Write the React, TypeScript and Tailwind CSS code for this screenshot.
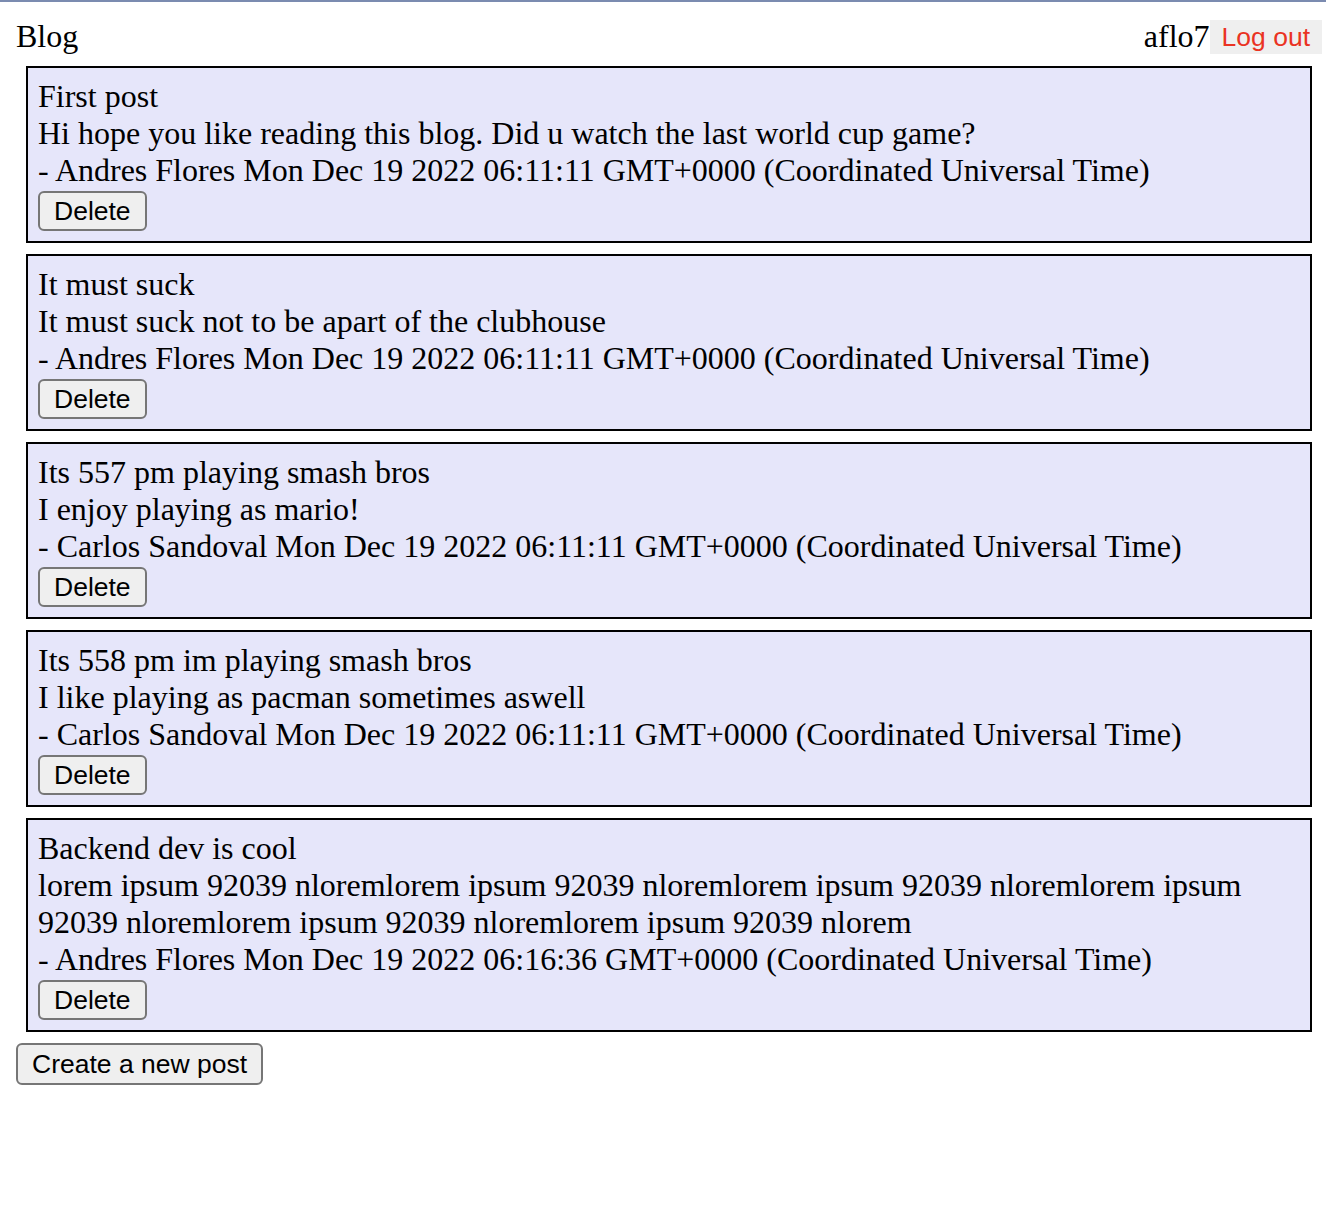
import React from 'react';

type Post = {
  title: string;
  body: string;
  author: string;
  date: string;
};

const posts: Post[] = [
  {
    title: 'First post',
    body: 'Hi hope you like reading this blog. Did u watch the last world cup game?',
    author: 'Andres Flores',
    date: 'Mon Dec 19 2022 06:11:11 GMT+0000 (Coordinated Universal Time)',
  },
  {
    title: 'It must suck',
    body: 'It must suck not to be apart of the clubhouse',
    author: 'Andres Flores',
    date: 'Mon Dec 19 2022 06:11:11 GMT+0000 (Coordinated Universal Time)',
  },
  {
    title: 'Its 557 pm playing smash bros',
    body: 'I enjoy playing as mario!',
    author: 'Carlos Sandoval',
    date: 'Mon Dec 19 2022 06:11:11 GMT+0000 (Coordinated Universal Time)',
  },
  {
    title: 'Its 558 pm im playing smash bros',
    body: 'I like playing as pacman sometimes aswell',
    author: 'Carlos Sandoval',
    date: 'Mon Dec 19 2022 06:11:11 GMT+0000 (Coordinated Universal Time)',
  },
  {
    title: 'Backend dev is cool',
    body: 'lorem ipsum 92039 nloremlorem ipsum 92039 nloremlorem ipsum 92039 nloremlorem ipsum 92039 nloremlorem ipsum 92039 nloremlorem ipsum 92039 nlorem',
    author: 'Andres Flores',
    date: 'Mon Dec 19 2022 06:16:36 GMT+0000 (Coordinated Universal Time)',
  },
];

const btn =
  "block bg-[#efefef] border-2 border-[#767676] rounded-[6px] px-[14px] text-[26.5px] leading-[32px] text-black font-['Liberation_Sans',Arial,sans-serif]";

const App: React.FC = () => {
  return (
    <div className="min-h-[1214px] bg-white border-t-2 border-[#7b8bb0] font-['Liberation_Serif','Times_New_Roman',serif] text-[32px] leading-[37px] text-black">
      <div className="pl-4 pr-1 pt-4">
        <div className="flex items-center justify-between h-[37px]">
          <span>Blog</span>
          <div className="flex items-center">
            <span>aflo7</span>
            <button className="bg-[#efefef] px-3 py-[2px] text-[26.5px] leading-[30px] text-[#ea3323] font-['Liberation_Sans',Arial,sans-serif]">
              Log out
            </button>
          </div>
        </div>

        <div className="mt-[11px] flex flex-col gap-[11px] px-[10px]">
          {posts.map((p, i) => (
            <div key={i} className="border-2 border-black bg-[#e6e6fa] px-[10px] pt-[10px] pb-[10px]">
              <div>{p.title}</div>
              <div>{p.body}</div>
              <div>
                - {p.author} {p.date}
              </div>
              <button className={`${btn} mt-[2px] py-[2px]`}>Delete</button>
            </div>
          ))}
        </div>

        <button className={`${btn} mt-[11px] py-[3px]`}>Create a new post</button>
      </div>
    </div>
  );
};

export default App;
